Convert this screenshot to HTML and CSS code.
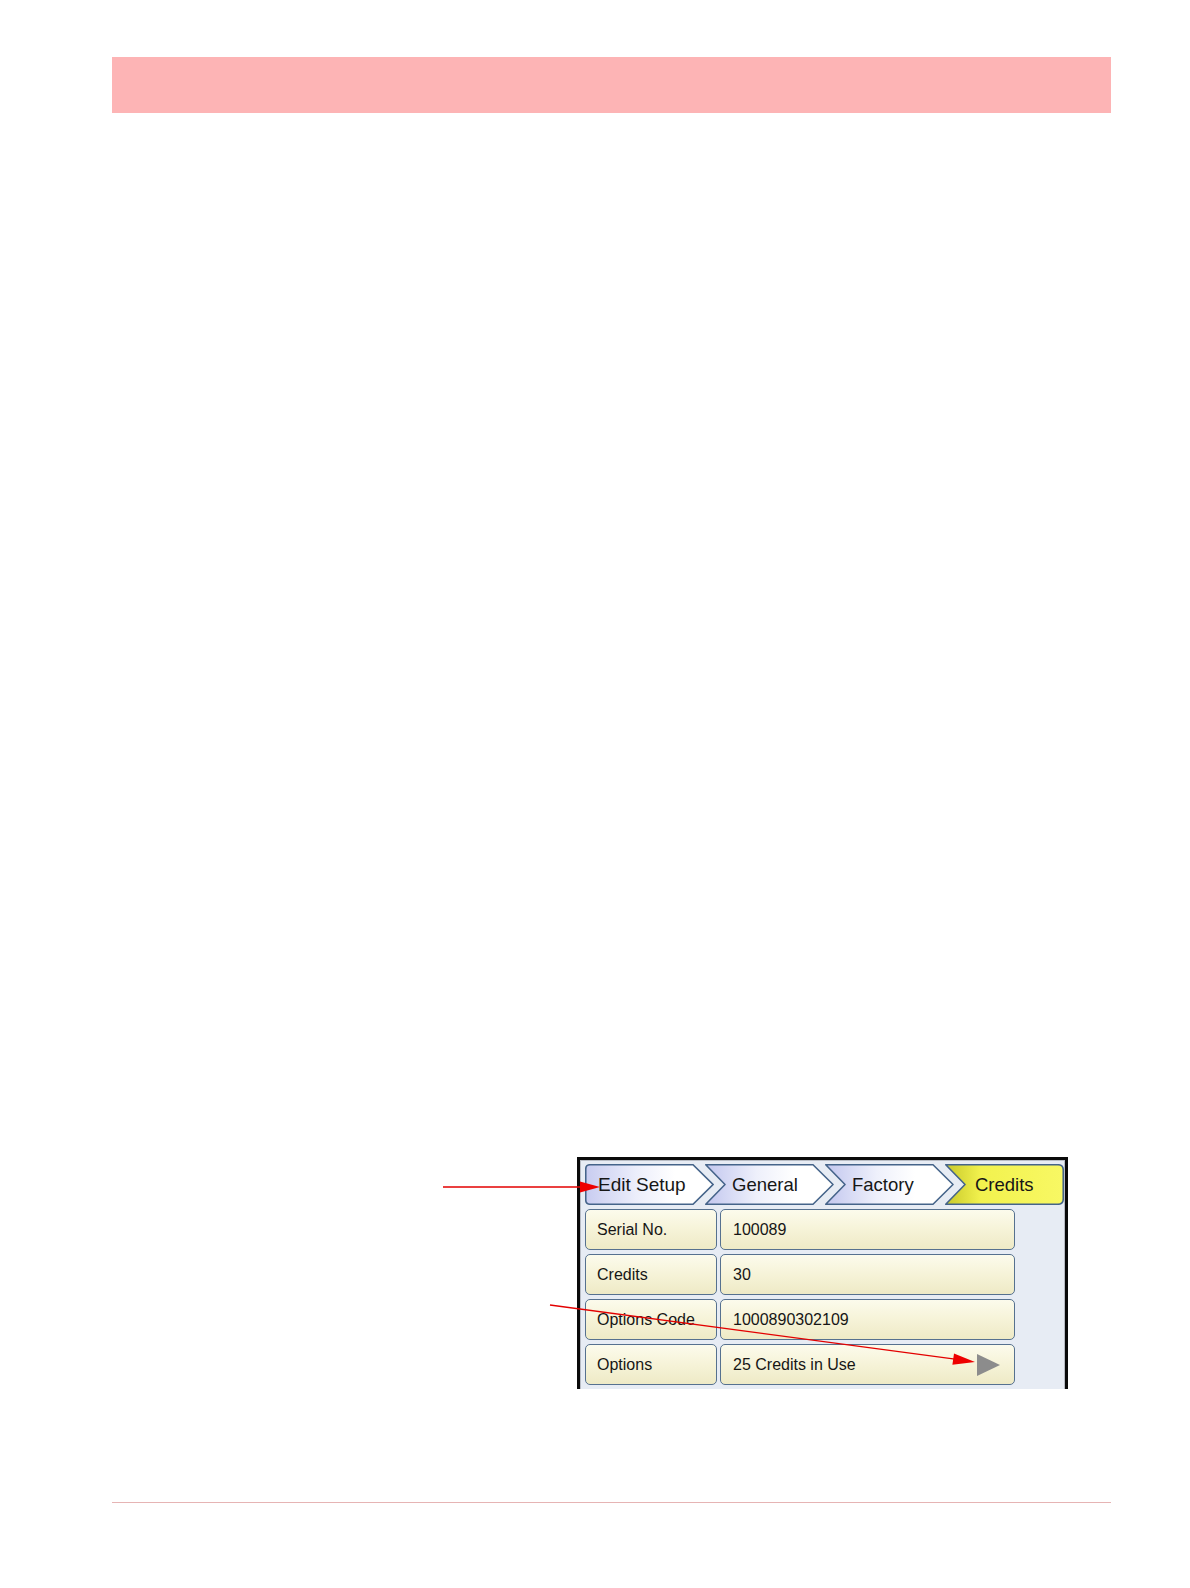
FILE: index.html
```html
<!DOCTYPE html>
<html>
<head>
<meta charset="utf-8">
<title>Credits</title>
<link rel="stylesheet" href="styles.css">
</head>
<body>
<div class="page">
  <div class="header-bar"></div>

  <div class="figure">
    <div class="panel">
      <div class="crumbs">
        <div class="tab tab-first">
          <svg class="tab-bg" width="129" height="41" viewBox="0 0 129 41">
            <defs>
              <linearGradient id="g1" x1="0" y1="0" x2="1" y2="0">
                <stop offset="0" stop-color="#c8ccf0"/>
                <stop offset="0.4" stop-color="#eceefb"/>
                <stop offset="0.7" stop-color="#ffffff"/>
              </linearGradient>
            </defs>
            <path d="M5,0.75 H108 L128,20.5 L108,40.25 H5 Q0.75,40.25 0.75,36 V5 Q0.75,0.75 5,0.75 Z" fill="url(#g1)" stroke="#45648a" stroke-width="1.6"/>
          </svg>
          <span class="tab-label">Edit Setup</span>
        </div>
        <div class="tab tab-mid">
          <svg class="tab-bg" width="129" height="41" viewBox="0 0 129 41">
            <defs>
              <linearGradient id="g2" x1="0" y1="0" x2="1" y2="0">
                <stop offset="0.05" stop-color="#c8ccf0"/>
                <stop offset="0.4" stop-color="#eef0fb"/>
                <stop offset="0.7" stop-color="#ffffff"/>
              </linearGradient>
            </defs>
            <path d="M0.75,0.75 H108 L128,20.5 L108,40.25 H0.75 L20,20.5 Z" fill="url(#g2)" stroke="#45648a" stroke-width="1.6" stroke-linejoin="round"/>
          </svg>
          <span class="tab-label">General</span>
        </div>
        <div class="tab tab-mid">
          <svg class="tab-bg" width="129" height="41" viewBox="0 0 129 41">
            <defs>
              <linearGradient id="g3" x1="0" y1="0" x2="1" y2="0">
                <stop offset="0.05" stop-color="#c8ccf0"/>
                <stop offset="0.4" stop-color="#eef0fb"/>
                <stop offset="0.7" stop-color="#ffffff"/>
              </linearGradient>
            </defs>
            <path d="M0.75,0.75 H108 L128,20.5 L108,40.25 H0.75 L20,20.5 Z" fill="url(#g3)" stroke="#45648a" stroke-width="1.6" stroke-linejoin="round"/>
          </svg>
          <span class="tab-label">Factory</span>
        </div>
        <div class="tab tab-last">
          <svg class="tab-bg" width="119" height="41" viewBox="0 0 119 41">
            <defs>
              <linearGradient id="g4" x1="0" y1="0" x2="1" y2="0">
                <stop offset="0.05" stop-color="#cfcf30"/>
                <stop offset="0.3" stop-color="#f2f24e"/>
                <stop offset="1" stop-color="#f8f864"/>
              </linearGradient>
            </defs>
            <path d="M0.75,0.75 H113 Q118.25,0.75 118.25,6 V35 Q118.25,40.25 113,40.25 H0.75 L20,20.5 Z" fill="url(#g4)" stroke="#45648a" stroke-width="1.6" stroke-linejoin="round"/>
          </svg>
          <span class="tab-label">Credits</span>
        </div>
      </div>

      <div class="rows">
        <div class="cell cell-label">Serial No.</div>
        <div class="cell cell-value">100089</div>
        <div class="cell cell-label">Credits</div>
        <div class="cell cell-value">30</div>
        <div class="cell cell-label">Options Code</div>
        <div class="cell cell-value">1000890302109</div>
        <div class="cell cell-label">Options</div>
        <div class="cell cell-value cell-more">
          <span>25 Credits in Use</span>
          <svg class="play" width="23" height="22" viewBox="0 0 23 22"><path d="M0,0 L23,11 L0,22 Z" fill="#8c8c8c"/></svg>
        </div>
      </div>
    </div>
  </div>

  <div class="footer-line"></div>

  <svg class="annotations" width="1190" height="1588" viewBox="0 0 1190 1588">
    <line x1="443" y1="1187" x2="583" y2="1187" stroke="#e30000" stroke-width="1.3"/>
    <polygon points="580,1181.5 600,1187 580,1192.5" fill="#ee0000"/>
    <line x1="550" y1="1305" x2="955" y2="1359.2" stroke="#e30000" stroke-width="1.3"/>
    <polygon points="954,1353.4 975,1362 952.4,1364.8" fill="#ee0000"/>
  </svg>
</div>
</body>
</html>
```

FILE: styles.css
```css
html, body {
  margin: 0;
  padding: 0;
  background: #ffffff;
}

.page {
  position: relative;
  width: 1190px;
  height: 1588px;
  overflow: hidden;
  font-family: "Liberation Sans", Arial, sans-serif;
  color: #161616;
}

.header-bar {
  margin: 57px 0 0 112px;
  width: 999px;
  height: 56px;
  background: #fdb4b5;
}

.figure {
  margin: 1044px 0 0 577px;
}

.panel {
  box-sizing: border-box;
  width: 491px;
  height: 232px;
  border: 3px solid #0a0a0a;
  border-bottom: none;
  padding: 4px 0 0 5px;
  background: #e7ecf4;
  box-shadow: inset 1px 1px 0 #b8bcc4, inset -1px 0 0 #b8bcc4;
}

.crumbs {
  display: flex;
  height: 41px;
}

.tab {
  position: relative;
  height: 41px;
  flex: none;
  display: flex;
  align-items: center;
}

.tab-first,
.tab-mid {
  width: 129px;
}

.tab-mid,
.tab-last {
  margin-left: -9px;
}

.tab-last {
  width: 119px;
}

.tab-bg {
  position: absolute;
  left: 0;
  top: 0;
}

.tab-label {
  position: relative;
  font-size: 18.5px;
  line-height: 41px;
  white-space: nowrap;
}

.tab-first .tab-label {
  padding-left: 13px;
  font-size: 19px;
}

.tab-mid .tab-label {
  padding-left: 27px;
}

.tab-last .tab-label {
  padding-left: 30px;
}

.rows {
  margin-top: 4px;
  display: grid;
  grid-template-columns: 132px 295px;
  grid-auto-rows: 41px;
  column-gap: 3px;
  row-gap: 4px;
}

.cell {
  box-sizing: border-box;
  border: 1.5px solid #56718f;
  border-radius: 5px;
  background: linear-gradient(to bottom, #fcfbec 0%, #f6f3d8 50%, #eeeac6 100%);
  font-size: 16px;
  display: flex;
  align-items: center;
  white-space: nowrap;
}

.cell-label {
  padding-left: 11px;
}

.cell-value {
  padding-left: 12px;
}

.cell-more {
  justify-content: space-between;
  padding-right: 14px;
}

.play {
  display: block;
  margin-top: 1px;
}

.footer-line {
  margin: 113px 0 0 112px;
  width: 999px;
  height: 1px;
  background: #e6b4b4;
}

.annotations {
  position: absolute;
  left: 0;
  top: 0;
  pointer-events: none;
}
```
